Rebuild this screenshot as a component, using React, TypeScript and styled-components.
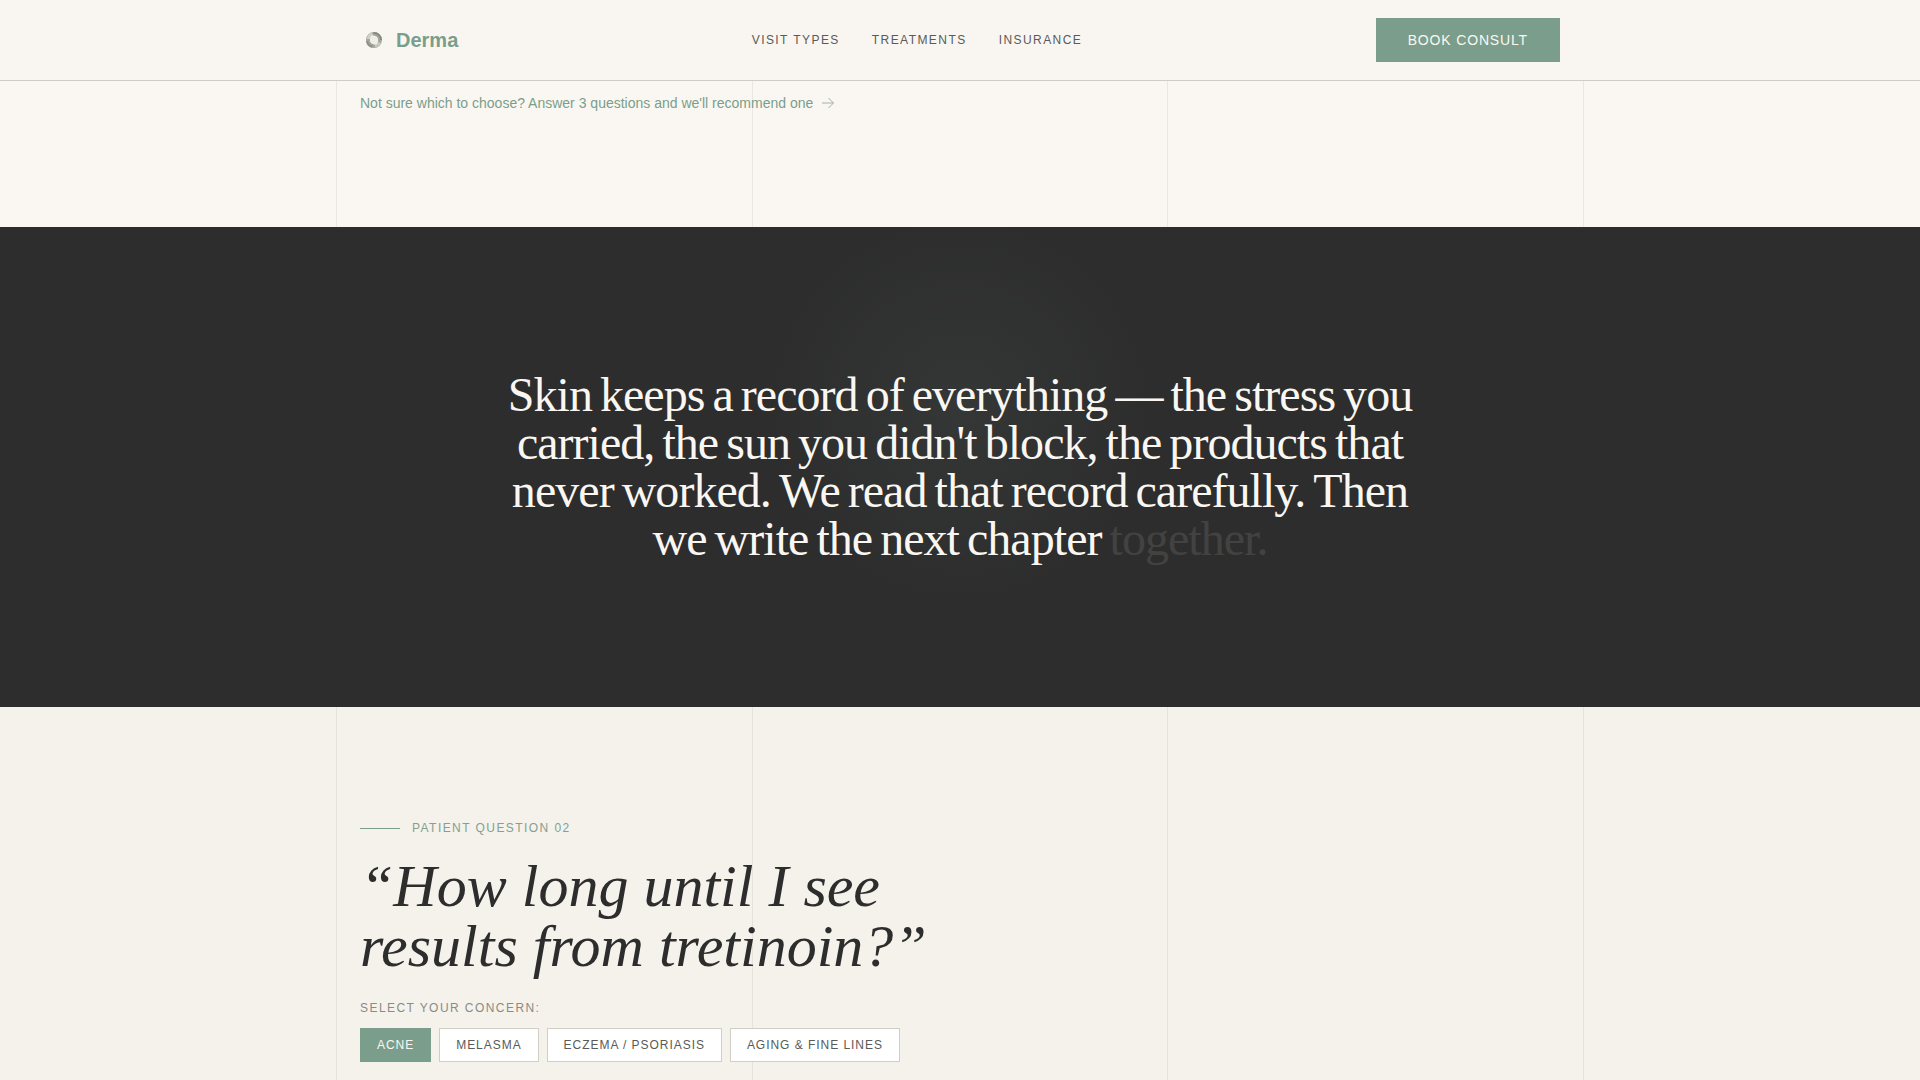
import React, { useState } from "react";
import styled, { createGlobalStyle } from "styled-components";

const sage = "#7a9e8b";
const charcoal = "#2d2d2d";
const ivory = "#faf7f2";

const GlobalStyle = createGlobalStyle`
  *, *::before, *::after { box-sizing: border-box; }
  body {
    margin: 0;
    background: ${ivory};
    color: ${charcoal};
    font-family: "Liberation Sans", Arial, sans-serif;
  }
`;

const Page = styled.div`
  height: 100vh;
  overflow: clip;
`;

const Container = styled.div`
  width: 100%;
  max-width: 1248px;
  margin: 0 auto;
  padding: 0 24px;
`;

const Header = styled.header`
  background: #f9f6f1;
  border-bottom: 1px solid #cfccc6;
`;

const HeaderBar = styled(Container)`
  display: flex;
  align-items: center;
  justify-content: space-between;
  height: 80px;
`;

const Brand = styled.a`
  display: flex;
  align-items: center;
  gap: 8px;
  color: ${sage};
  font-size: 20px;
  line-height: 28px;
  font-weight: 700;
  text-decoration: none;
`;

const Nav = styled.nav`
  display: flex;
  gap: 32px;
`;

const NavLink = styled.a`
  color: #5a5a58;
  font-size: 12px;
  line-height: 16px;
  letter-spacing: 0.12em;
  text-transform: uppercase;
  text-decoration: none;
`;

const BookButton = styled.button`
  padding: 12px 32px;
  border: 0;
  background: ${sage};
  color: ${ivory};
  font: inherit;
  font-size: 14px;
  line-height: 20px;
  letter-spacing: 0.06em;
  text-transform: uppercase;
`;

const RuledSection = styled.section<{ $tone: string }>`
  position: relative;
  isolation: isolate;
  background: ${(p) => p.$tone};
`;

const Rules = styled.div`
  position: absolute;
  inset: 0;
  z-index: -1;
  width: 100%;
  max-width: 1248px;
  margin: 0 auto;
  display: flex;
  justify-content: space-between;
  pointer-events: none;
`;

const Rule = styled.span`
  width: 1px;
  background: rgba(45, 45, 45, 0.07);
`;

const VisitFooter = styled(Container)`
  padding-top: 12px;
  padding-bottom: 114px;
`;

const QuizLink = styled.a`
  display: inline-flex;
  align-items: center;
  gap: 8px;
  color: ${sage};
  font-size: 14px;
  line-height: 20px;
  text-decoration: none;
`;

const Statement = styled.section`
  padding: 144px 24px;
  background:
    radial-gradient(circle 190px at 50% 38%, rgba(122, 158, 139, 0.09), rgba(122, 158, 139, 0)),
    ${charcoal};
`;

const StatementText = styled.p`
  display: flex;
  flex-wrap: wrap;
  justify-content: center;
  column-gap: 8px;
  max-width: 928px;
  margin: 0 auto;
  color: ${ivory};
  font-family: "Liberation Serif", "Times New Roman", serif;
  font-size: 48px;
  line-height: 48px;
  letter-spacing: -0.02em;
`;

const Word = styled.span<{ $lit: boolean }>`
  opacity: ${(p) => (p.$lit ? 1 : 0.1)};
`;

const Question = styled(Container)`
  padding-top: 112px;
  padding-bottom: 112px;
`;

const Eyebrow = styled.div`
  display: flex;
  align-items: center;
  gap: 12px;
  margin-bottom: 19px;
  color: #83a090;
  font-size: 12px;
  line-height: 18px;
  letter-spacing: 0.12em;
  text-transform: uppercase;

  &::before {
    content: "";
    width: 40px;
    height: 1px;
    background: ${sage};
  }
`;

const QuestionTitle = styled.h2`
  max-width: 640px;
  margin: 0 0 24px;
  font-family: "Liberation Serif", "Times New Roman", serif;
  font-size: 60px;
  font-style: italic;
  font-weight: 400;
  line-height: 60px;
`;

const ConcernLabel = styled.p`
  margin: 0 0 12px;
  color: #8a8a86;
  font-size: 12px;
  line-height: 16px;
  letter-spacing: 0.12em;
  text-transform: uppercase;
`;

const Chips = styled.div`
  display: flex;
  flex-wrap: wrap;
  gap: 8px;
`;

const Chip = styled.button<{ $active: boolean }>`
  padding: 8px 16px;
  border: 1px solid ${(p) => (p.$active ? sage : "#d0cfc6")};
  background: ${(p) => (p.$active ? sage : "#ffffff")};
  color: ${(p) => (p.$active ? ivory : "#5a5a58")};
  font: inherit;
  font-size: 12px;
  line-height: 16px;
  letter-spacing: 0.08em;
  text-transform: uppercase;
`;

const concerns = ["Acne", "Melasma", "Eczema / Psoriasis", "Aging & Fine Lines"];

const statement =
  "Skin keeps a record of everything — the stress you carried, the sun you didn't block, " +
  "the products that never worked. We read that record carefully. Then we write the next " +
  "chapter together.";

const words = statement.split(" ");
const litWords = words.length - 1;

const Logo = () => (
  <svg width="28" height="28" viewBox="0 0 28 28" aria-hidden="true">
    <circle cx="14" cy="14" r="6" fill="none" stroke="#a6a89e" strokeWidth="4" />
    <path d="M8.6 13A5.8 5.8 0 0 1 12.5 8.2" fill="none" stroke="#d0d0c8" strokeWidth="3.5" />
    <path d="M13.5 7A7 7 0 0 1 21 14" fill="none" stroke="#868a7f" strokeWidth="2" />
    <path d="M7 15A7 7 0 0 0 12.5 20.8" fill="none" stroke="#8e9287" strokeWidth="2" />
    <path d="M19.5 16.5A6 6 0 0 1 15 20" fill="none" stroke="#c8c9c1" strokeWidth="3" />
    <ellipse cx="14" cy="14" rx="3.4" ry="5" transform="rotate(-28 14 14)" fill="#efede7" />
  </svg>
);

const Arrow = () => (
  <svg width="14" height="16" viewBox="0 0 14 16" fill="none" stroke="#a3b1a6" aria-hidden="true">
    <path d="M1 8h11.5M7.5 3 12.5 8 7.5 13" />
  </svg>
);

const GuideRules = () => (
  <Rules aria-hidden="true">
    <Rule />
    <Rule />
    <Rule />
    <Rule />
  </Rules>
);

export default function App() {
  const [concern, setConcern] = useState(concerns[0]);

  return (
    <Page>
      <GlobalStyle />
      <Header>
        <HeaderBar>
          <Brand href="#top">
            <Logo />
            Derma
          </Brand>
          <Nav aria-label="Main">
            <NavLink href="#visits">Visit Types</NavLink>
            <NavLink href="#treatments">Treatments</NavLink>
            <NavLink href="#insurance">Insurance</NavLink>
          </Nav>
          <BookButton type="button">Book Consult</BookButton>
        </HeaderBar>
      </Header>
      <main>
        <RuledSection $tone={ivory} id="visits">
          <GuideRules />
          <VisitFooter>
            <QuizLink href="#quiz">
              Not sure which to choose? Answer 3 questions and we'll recommend one
              <Arrow />
            </QuizLink>
          </VisitFooter>
        </RuledSection>
        <Statement>
          <StatementText>
            {words.map((word, i) => (
              <Word key={i} $lit={i < litWords}>
                {word}{" "}
              </Word>
            ))}
          </StatementText>
        </Statement>
        <RuledSection $tone="#f5f2eb" id="treatments">
          <GuideRules />
          <Question>
            <Eyebrow>Patient Question 02</Eyebrow>
            <QuestionTitle>“How long until I see results from tretinoin?”</QuestionTitle>
            <ConcernLabel id="concern-label">Select your concern:</ConcernLabel>
            <Chips role="group" aria-labelledby="concern-label">
              {concerns.map((name) => (
                <Chip
                  key={name}
                  type="button"
                  $active={name === concern}
                  aria-pressed={name === concern}
                  onClick={() => setConcern(name)}
                >
                  {name}
                </Chip>
              ))}
            </Chips>
          </Question>
        </RuledSection>
      </main>
    </Page>
  );
}
